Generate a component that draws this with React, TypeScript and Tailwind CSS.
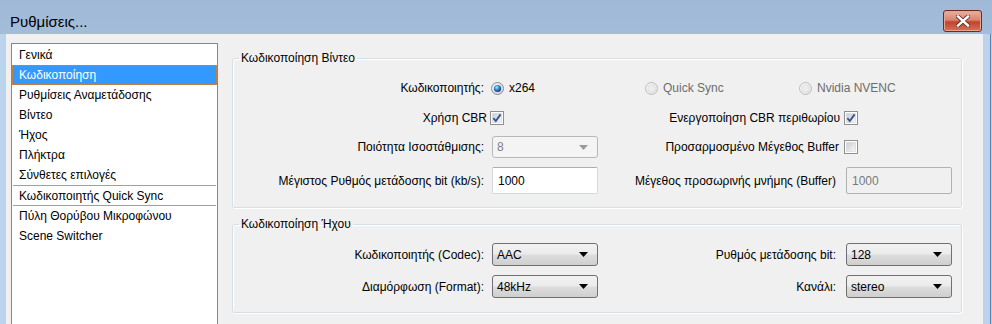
import React from "react";

const Radio = ({ checked = false, disabled = false }: { checked?: boolean; disabled?: boolean }) => (
  <svg width="13" height="13" viewBox="0 0 13 13" className="shrink-0">
    <defs>
      <linearGradient id={disabled ? "rdOff" : "rdOn"} x1="0" y1="0" x2="1" y2="1">
        <stop offset="0" stopColor={disabled ? "#f8f8f8" : "#f6f6f6"} />
        <stop offset="1" stopColor={disabled ? "#e2e2e2" : "#d0d0d0"} />
      </linearGradient>
      <radialGradient id="rdDot" cx="0.4" cy="0.35" r="0.7">
        <stop offset="0" stopColor="#b6ecff" />
        <stop offset="0.45" stopColor="#2c8ee0" />
        <stop offset="1" stopColor="#0b2f63" />
      </radialGradient>
    </defs>
    <circle cx="6.5" cy="6.5" r="6" fill={`url(#${disabled ? "rdOff" : "rdOn"})`} stroke={disabled ? "#bcbcbc" : "#8a8a8a"} />
    {checked ? (
      <circle cx="6.5" cy="6.5" r="3.6" fill="url(#rdDot)" />
    ) : (
      <circle cx="6.5" cy="6.5" r="3.8" fill={disabled ? "#ececec" : "#e4e4e4"} stroke="#d6d6d6" strokeWidth="0.6" />
    )}
  </svg>
);

const Check = ({ checked = false }: { checked?: boolean }) => (
  <svg width="14" height="14" viewBox="0 0 14 14" className="shrink-0">
    <defs>
      <linearGradient id="cbIn" x1="0" y1="0" x2="1" y2="1">
        <stop offset="0" stopColor="#c9cdd2" />
        <stop offset="1" stopColor="#f7f7f7" />
      </linearGradient>
    </defs>
    <rect x="0.5" y="0.5" width="13" height="13" fill="#fff" stroke="#8e8f8f" />
    <rect x="2.5" y="2.5" width="9" height="9" fill="url(#cbIn)" stroke="#d0d3d7" strokeWidth="0.6" />
    {checked && <path d="M3.4 7.2 L5.8 10 L10.6 3.4" fill="none" stroke="#3d5294" strokeWidth="1.9" />}
  </svg>
);

const Combo = ({ value, disabled = false, h = "h-[23px]" }: { value: string; disabled?: boolean; h?: string }) => (
  <div
    className={`${h} w-[106px] shrink-0 flex items-center justify-between rounded-[3px] border pl-[4px] pr-[9px] ${
      disabled
        ? "border-[#b5b9bc] bg-[#f4f4f4] text-[#7f7f7f]"
        : "border-[#707070] bg-[linear-gradient(to_bottom,#f2f2f2_0%,#ebebeb_48%,#dddddd_52%,#cfcfcf_100%)] text-black"
    }`}
  >
    <span>{value}</span>
    <svg width="9" height="5" viewBox="0 0 9 5">
      <path d="M0 0 H9 L4.5 5 Z" fill={disabled ? "#9a9a9a" : "#000"} />
    </svg>
  </div>
);

const Input = ({ value, disabled = false }: { value: string; disabled?: boolean }) => (
  <div
    className={`h-[27px] w-[106px] shrink-0 flex items-center rounded-[2px] border pl-[5px] ${
      disabled ? "border-[#b2b2b2] bg-[#f0f0f0] text-[#7a7a7a]" : "border-[#d5d8dd] border-t-[#abadb3] bg-white text-black"
    }`}
  >
    {value}
  </div>
);

const NAV = [
  "Γενικά",
  "Κωδικοποίηση",
  "Ρυθμίσεις Αναμετάδοσης",
  "Βίντεο",
  "Ήχος",
  "Πλήκτρα",
  "Σύνθετες επιλογές",
];

const App = () => {
  return (
    <div className="w-[992px] h-[324px] overflow-hidden flex flex-col bg-[linear-gradient(to_bottom,#9fb9d7,#c0d5ec)] font-['Liberation_Sans',Arial,sans-serif] text-[12px] leading-[14px] text-black">
      {/* title bar */}
      <div className="h-[34px] shrink-0 flex items-start justify-between pl-[10px] pr-[10px]">
        <div className="mt-[13px] text-[15px] leading-[17px] text-black">Ρυθμίσεις...</div>
        <button className="mt-[10px] w-[39px] h-[22px] flex items-center justify-center rounded-[3px] border border-[#6b2a22] bg-[linear-gradient(to_bottom,#eab0a2_0%,#d88470_45%,#c2432b_55%,#d4745a_100%)] shadow-[inset_0_0_0_1px_#e9a592]">
          <svg width="14" height="12" viewBox="0 0 14 12">
            <path d="M2 1.5 L12 10.5 M12 1.5 L2 10.5" stroke="#5a2a22" strokeWidth="4" strokeLinecap="square" />
            <path d="M2 1.5 L12 10.5 M12 1.5 L2 10.5" stroke="#fff" strokeWidth="2.4" strokeLinecap="square" />
          </svg>
        </button>
      </div>

      <div className="flex flex-1 min-h-0">
        <div className="w-[6px] shrink-0 bg-[#bcd3ed]" />

        {/* client area */}
        <div className="w-[977px] shrink-0 bg-[#f0f0f0] flex items-start pl-[5px]">
          {/* list */}
          <div className="mt-[9px] w-[207px] h-[300px] shrink-0 bg-white border border-[#828790] pt-[1px]">
            {NAV.map((item) => (
              <div
                key={item}
                className={`h-[20px] flex items-center pl-[6px] ${
                  item === "Κωδικοποίηση" ? "bg-[#3399ff] text-white border border-dotted border-[#c7864a]" : "border border-transparent"
                }`}
              >
                {item}
              </div>
            ))}
            <div className="h-[1px] bg-[#a0a0a0] mx-[1px]" />
            <div className="h-[19px] flex items-center pl-[7px]">Κωδικοποιητής Quick Sync</div>
            <div className="h-[1px] bg-[#a0a0a0] mx-[1px]" />
            <div className="h-[20px] flex items-center pl-[7px]">Πύλη Θορύβου Μικροφώνου</div>
            <div className="h-[20px] flex items-center pl-[7px]">Scene Switcher</div>
          </div>

          {/* groups */}
          <div className="ml-[14px] mt-[17px] w-[730px] flex flex-col">
            <fieldset className="border border-[#d5dfe5] rounded-[3px] shadow-[inset_1px_1px_0_#fff,1px_1px_0_#fff] pb-[13px]">
              <legend className="ml-[6px] px-[2px] leading-[14px]">Κωδικοποίηση Βίντεο</legend>

              <div className="mt-[13px] h-[20px] flex items-center">
                <div className="w-[251px] text-right">Κωδικοποιητής:</div>
                <div className="ml-[7px] w-[154px] flex items-center gap-[5px]">
                  <Radio checked />
                  <span>x264</span>
                </div>
                <div className="w-[154px] flex items-center gap-[5px] text-[#6d6d6d]">
                  <Radio disabled />
                  <span>Quick Sync</span>
                </div>
                <div className="w-[154px] flex items-center gap-[5px] text-[#6d6d6d]">
                  <Radio disabled />
                  <span>Nvidia NVENC</span>
                </div>
              </div>

              <div className="mt-[10px] h-[20px] flex items-center">
                <div className="w-[254px] text-right">Χρήση CBR</div>
                <div className="ml-[3px]">
                  <Check checked />
                </div>
                <div className="w-[336px] text-right">Ενεργοποίηση CBR περιθωρίου</div>
                <div className="ml-[4px]">
                  <Check checked />
                </div>
              </div>

              <div className="mt-[8px] h-[22px] flex items-center">
                <div className="w-[251px] text-right">Ποιότητα Ισοστάθμισης:</div>
                <div className="ml-[8px]">
                  <Combo value="8" disabled h="h-[22px]" />
                </div>
                <div className="w-[241px] text-right">Προσαρμοσμένο Μέγεθος Buffer</div>
                <div className="ml-[5px]">
                  <Check />
                </div>
              </div>

              <div className="mt-[9px] h-[27px] flex items-center">
                <div className="w-[251px] text-right">Μέγιστος Ρυθμός μετάδοσης bit (kb/s):</div>
                <div className="ml-[8px]">
                  <Input value="1000" />
                </div>
                <div className="w-[238px] text-right">Μέγεθος προσωρινής μνήμης (Buffer)</div>
                <div className="ml-[10px]">
                  <Input value="1000" disabled />
                </div>
              </div>
            </fieldset>

            <fieldset className="mt-[9px] border border-[#d5dfe5] rounded-[3px] shadow-[inset_1px_1px_0_#fff,1px_1px_0_#fff] pb-[14px]">
              <legend className="ml-[6px] px-[2px] leading-[14px]">Κωδικοποίηση Ήχου</legend>

              <div className="mt-[12px] h-[23px] flex items-center">
                <div className="w-[251px] text-right">Κωδικοποιητής (Codec):</div>
                <div className="ml-[8px]">
                  <Combo value="AAC" />
                </div>
                <div className="w-[238px] text-right">Ρυθμός μετάδοσης bit:</div>
                <div className="ml-[10px]">
                  <Combo value="128" />
                </div>
              </div>

              <div className="mt-[9px] h-[23px] flex items-center">
                <div className="w-[251px] text-right">Διαμόρφωση (Format):</div>
                <div className="ml-[8px]">
                  <Combo value="48kHz" />
                </div>
                <div className="w-[238px] text-right">Κανάλι:</div>
                <div className="ml-[10px]">
                  <Combo value="stereo" />
                </div>
              </div>
            </fieldset>
          </div>
        </div>

        <div className="w-[7px] shrink-0 bg-[#bad2ed]" />
        <div className="w-[1px] shrink-0 bg-[#5b7ea6]" />
        <div className="w-[1px] shrink-0 bg-[#9fdcf5]" />
      </div>
    </div>
  );
};

export default App;
